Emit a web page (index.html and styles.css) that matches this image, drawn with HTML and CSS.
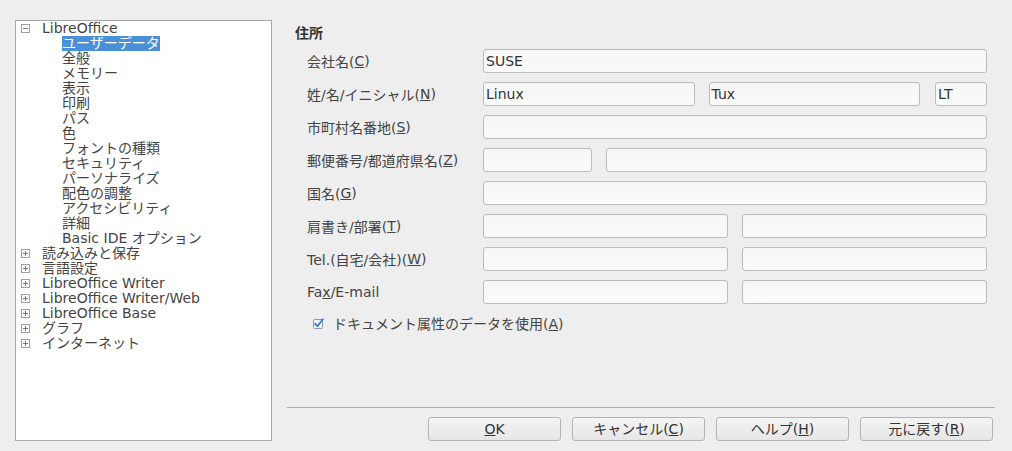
FILE: index.html
```html
<!DOCTYPE html>
<html lang="ja">
<head>
<meta charset="utf-8">
<link rel="stylesheet" href="styles.css">
</head>
<body>
<div class="tree">
  <div class="node"><span class="exp minus"></span><span class="t">LibreOffice</span></div>
  <div class="child"><span class="sel">ユーザーデータ</span></div>
  <div class="child">全般</div>
  <div class="child">メモリー</div>
  <div class="child">表示</div>
  <div class="child">印刷</div>
  <div class="child">パス</div>
  <div class="child">色</div>
  <div class="child">フォントの種類</div>
  <div class="child">セキュリティ</div>
  <div class="child">パーソナライズ</div>
  <div class="child">配色の調整</div>
  <div class="child">アクセシビリティ</div>
  <div class="child">詳細</div>
  <div class="child">Basic IDE オプション</div>
  <div class="node"><span class="exp plus"></span><span class="t">読み込みと保存</span></div>
  <div class="node"><span class="exp plus"></span><span class="t">言語設定</span></div>
  <div class="node"><span class="exp plus"></span><span class="t">LibreOffice Writer</span></div>
  <div class="node"><span class="exp plus"></span><span class="t">LibreOffice Writer/Web</span></div>
  <div class="node"><span class="exp plus"></span><span class="t">LibreOffice Base</span></div>
  <div class="node"><span class="exp plus"></span><span class="t">グラフ</span></div>
  <div class="node"><span class="exp plus"></span><span class="t">インターネット</span></div>
</div>
<div class="main">
  <div class="content">
    <div class="heading">住所</div>
    <div class="form">
      <label>会社名(<u>C</u>)</label>
      <div class="fields"><div class="in grow">SUSE</div></div>

      <label>姓/名/イニシャル(<u>N</u>)</label>
      <div class="fields"><div class="in w212">Linux</div><div class="in w212b">Tux</div><div class="in w52">LT</div></div>

      <label>市町村名番地(<u>S</u>)</label>
      <div class="fields"><div class="in grow"></div></div>

      <label>郵便番号/都道府県名(<u>Z</u>)</label>
      <div class="fields"><div class="in w109"></div><div class="in grow"></div></div>

      <label>国名(<u>G</u>)</label>
      <div class="fields"><div class="in grow"></div></div>

      <label>肩書き/部署(<u>T</u>)</label>
      <div class="fields"><div class="in w244"></div><div class="in grow"></div></div>

      <label>Tel.(自宅/会社)(<u>W</u>)</label>
      <div class="fields"><div class="in w244"></div><div class="in grow"></div></div>

      <label>Fa<u>x</u>/E-mail</label>
      <div class="fields"><div class="in w244"></div><div class="in grow"></div></div>
    </div>
    <div class="check">
      <svg class="cb" width="11" height="11" viewBox="0 0 11 11">
        <rect x="0.5" y="1.5" width="9" height="9" rx="1" fill="#eef3fa" stroke="#8a9ab0"/>
        <path d="M2.2 5.8 L4.4 8.2 L9.8 1.2" fill="none" stroke="#3b78c8" stroke-width="1.8" stroke-linecap="round" stroke-linejoin="round"/>
      </svg>
      <span>ドキュメント属性のデータを使用(<u>A</u>)</span>
    </div>
  </div>
  <div class="sep"></div>
  <div class="buttons">
    <button class="btn"><u>O</u>K</button>
    <button class="btn">キャンセル(<u>C</u>)</button>
    <button class="btn">ヘルプ(<u>H</u>)</button>
    <button class="btn">元に戻す(<u>R</u>)</button>
  </div>
</div>
</body>
</html>
```
FILE: styles.css
```css
* { box-sizing: border-box; }
html, body {
  margin: 0;
  height: 451px;
  overflow: hidden;
}
body {
  background: #eeeeee;
  font-family: "DejaVu Sans", "Noto Sans CJK JP", sans-serif;
  font-size: 14px;
  color: #444;
  display: flex;
}
.tree {
  margin: 20px 0 10px 15px;
  width: 257px;
  height: 421px;
  background: #fff;
  border: 1px solid #a8a8a8;
  padding-top: 0;
}
.node, .child {
  height: 15px;
  line-height: 15px;
  white-space: nowrap;
  display: flex;
  align-items: center;
}
.child { padding-left: 46px; }
.node .exp {
  width: 9px;
  height: 9px;
  border: 1px solid #a0a0a0;
  margin-left: 5px;
  margin-right: 12px;
  position: relative;
  flex: none;
}
.exp::before {
  content: "";
  position: absolute;
  left: 1px; right: 1px; top: 3px;
  height: 1px;
  background: #777;
}
.exp.plus::after {
  content: "";
  position: absolute;
  top: 1px; bottom: 1px; left: 3px;
  width: 1px;
  background: #777;
}
.sel {
  background: #4a90d9;
  color: #fff;
  display: inline-block;
  height: 15px;
}
.main {
  flex: 1;
  display: flex;
  flex-direction: column;
  padding: 0 17px 10px 15px;
}
.content {
  padding-left: 8px;
}
.heading {
  font-weight: bold;
  line-height: 16px;
  margin-top: 25px;
  margin-bottom: 8px;
  color: #333;
}
.form {
  margin-left: 12px;
  display: grid;
  grid-template-columns: 176px 504px;
  row-gap: 9px;
}
.form label {
  display: flex;
  align-items: center;
  height: 24px;
  white-space: nowrap;
}
.fields {
  display: flex;
  gap: 14px;
  height: 24px;
}
.in {
  height: 24px;
  border: 1px solid #bcbcbc;
  border-radius: 3px;
  background: linear-gradient(#f6f6f6, #fbfbfb);
  padding-left: 2px;
  line-height: 22px;
  color: #333;
}
.grow { flex: 1; }
.w212 { width: 212px; }
.w212b { width: 212px; }
.w52 { width: 52px; margin-left: 1px; }
.w109 { width: 109px; }
.w244 { width: 245px; }
.check {
  margin-top: 11px;
  margin-left: 18px;
  height: 16px;
  display: flex;
  align-items: center;
  gap: 9px;
}
.sep {
  margin-top: auto;
  height: 1px;
  background: #b0b0b0;
}
.buttons {
  margin-top: 9px;
  display: flex;
  justify-content: flex-end;
  gap: 11px;
  padding-right: 2px;
}
.btn {
  width: 133px;
  height: 24px;
  font: inherit;
  color: #333;
  border: 1px solid #b4b4b4;
  border-radius: 3px;
  background: linear-gradient(#f4f4f4, #e6e6e6);
  padding: 0;
  line-height: 22px;
}
```
